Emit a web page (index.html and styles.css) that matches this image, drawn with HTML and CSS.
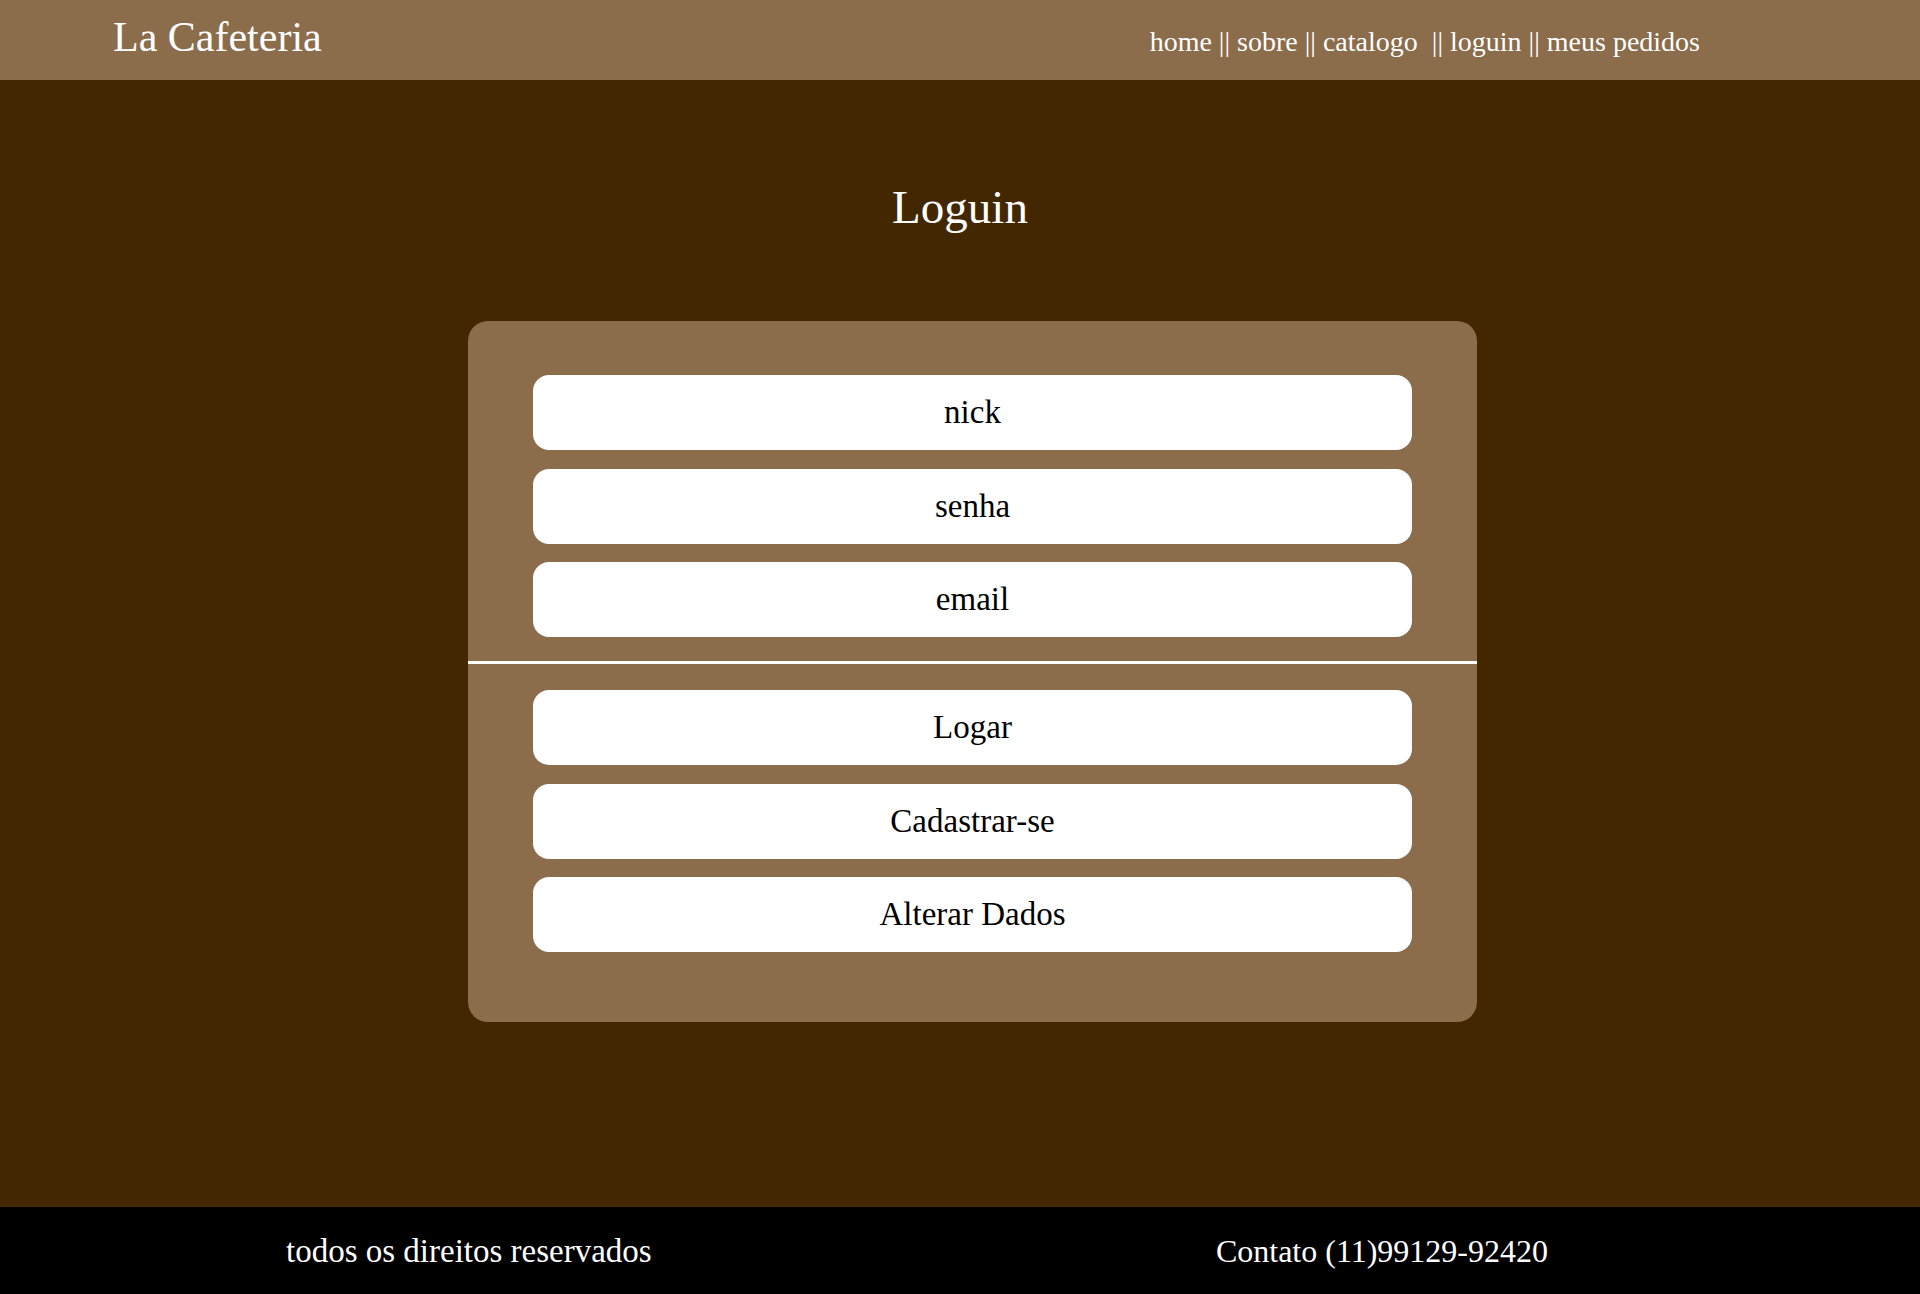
FILE: index.html
```html
<!DOCTYPE html>
<html lang="pt-BR">
<head>
<meta charset="utf-8">
<title>La Cafeteria - Loguin</title>
<link rel="stylesheet" href="styles.css">
</head>
<body>
<header class="topbar">
  <div class="brand">La Cafeteria</div>
  <nav class="nav"><a href="#">home</a> || <a href="#">sobre</a> || <a href="#">catalogo</a>&nbsp; || <a href="#">loguin</a> || <a href="#">meus pedidos</a></nav>
</header>
<main class="main">
  <h1 class="page-title">Loguin</h1>
  <div class="card">
    <div class="group">
      <input class="field" type="text" placeholder="nick">
      <input class="field" type="password" placeholder="senha">
      <input class="field" type="email" placeholder="email">
    </div>
    <hr class="divider">
    <div class="group">
      <button class="field btn" type="button">Logar</button>
      <button class="field btn" type="button">Cadastrar-se</button>
      <button class="field btn" type="button">Alterar Dados</button>
    </div>
  </div>
</main>
<footer class="footer">
  <span>todos os direitos reservados</span>
  <span>Contato (11)99129-92420</span>
</footer>
</body>
</html>
```
FILE: styles.css
```css
* { box-sizing: border-box; }
html, body { margin: 0; padding: 0; }
body {
  font-family: "Liberation Serif", "Times New Roman", serif;
  background: #432701;
  min-height: 100vh;
  display: flex;
  flex-direction: column;
}
.topbar {
  height: 80px;
  background: #8b6c4b;
  display: flex;
  justify-content: space-between;
  align-items: baseline;
  padding: 13px 220px 0 113px;
  color: #fff;
}
.brand {
  font-size: 42px;
  line-height: 48px;
}
.nav {
  font-size: 28px;
  line-height: 32px;
  white-space: nowrap;
}
.nav a { color: #fff; text-decoration: none; }
.main {
  flex: 1;
  padding-top: 99px;
}
.page-title {
  margin: 0;
  text-align: center;
  color: #fff;
  font-weight: normal;
  font-size: 47px;
  line-height: 56px;
}
.card {
  margin-top: 86px;
  margin-left: calc(50% - 492px);
  width: 1009px;
  background: #8b6c4b;
  border-radius: 20px;
  padding: 54px 0 70px;
}
.group {
  padding: 0 65px;
  display: flex;
  flex-direction: column;
  gap: 18.5px;
}
.divider {
  margin: 24px 0 26px;
  border: none;
  height: 3px;
  background: #fff;
}
.field {
  display: block;
  width: 100%;
  height: 75px;
  border: none;
  border-radius: 16px;
  background: #fff;
  color: #000;
  font-family: "Liberation Serif", "Times New Roman", serif;
  font-size: 33px;
  text-align: center;
  padding: 0;
  outline: none;
}
.field::placeholder { color: #000; opacity: 1; }
.btn { cursor: pointer; }
.footer {
  height: 87px;
  background: #000;
  color: #fff;
  display: flex;
  align-items: center;
  justify-content: space-between;
  padding: 0 372px 0 286px;
  font-size: 33px;
  line-height: 40px;
}
.footer span:last-child { font-size: 32px; }
```
